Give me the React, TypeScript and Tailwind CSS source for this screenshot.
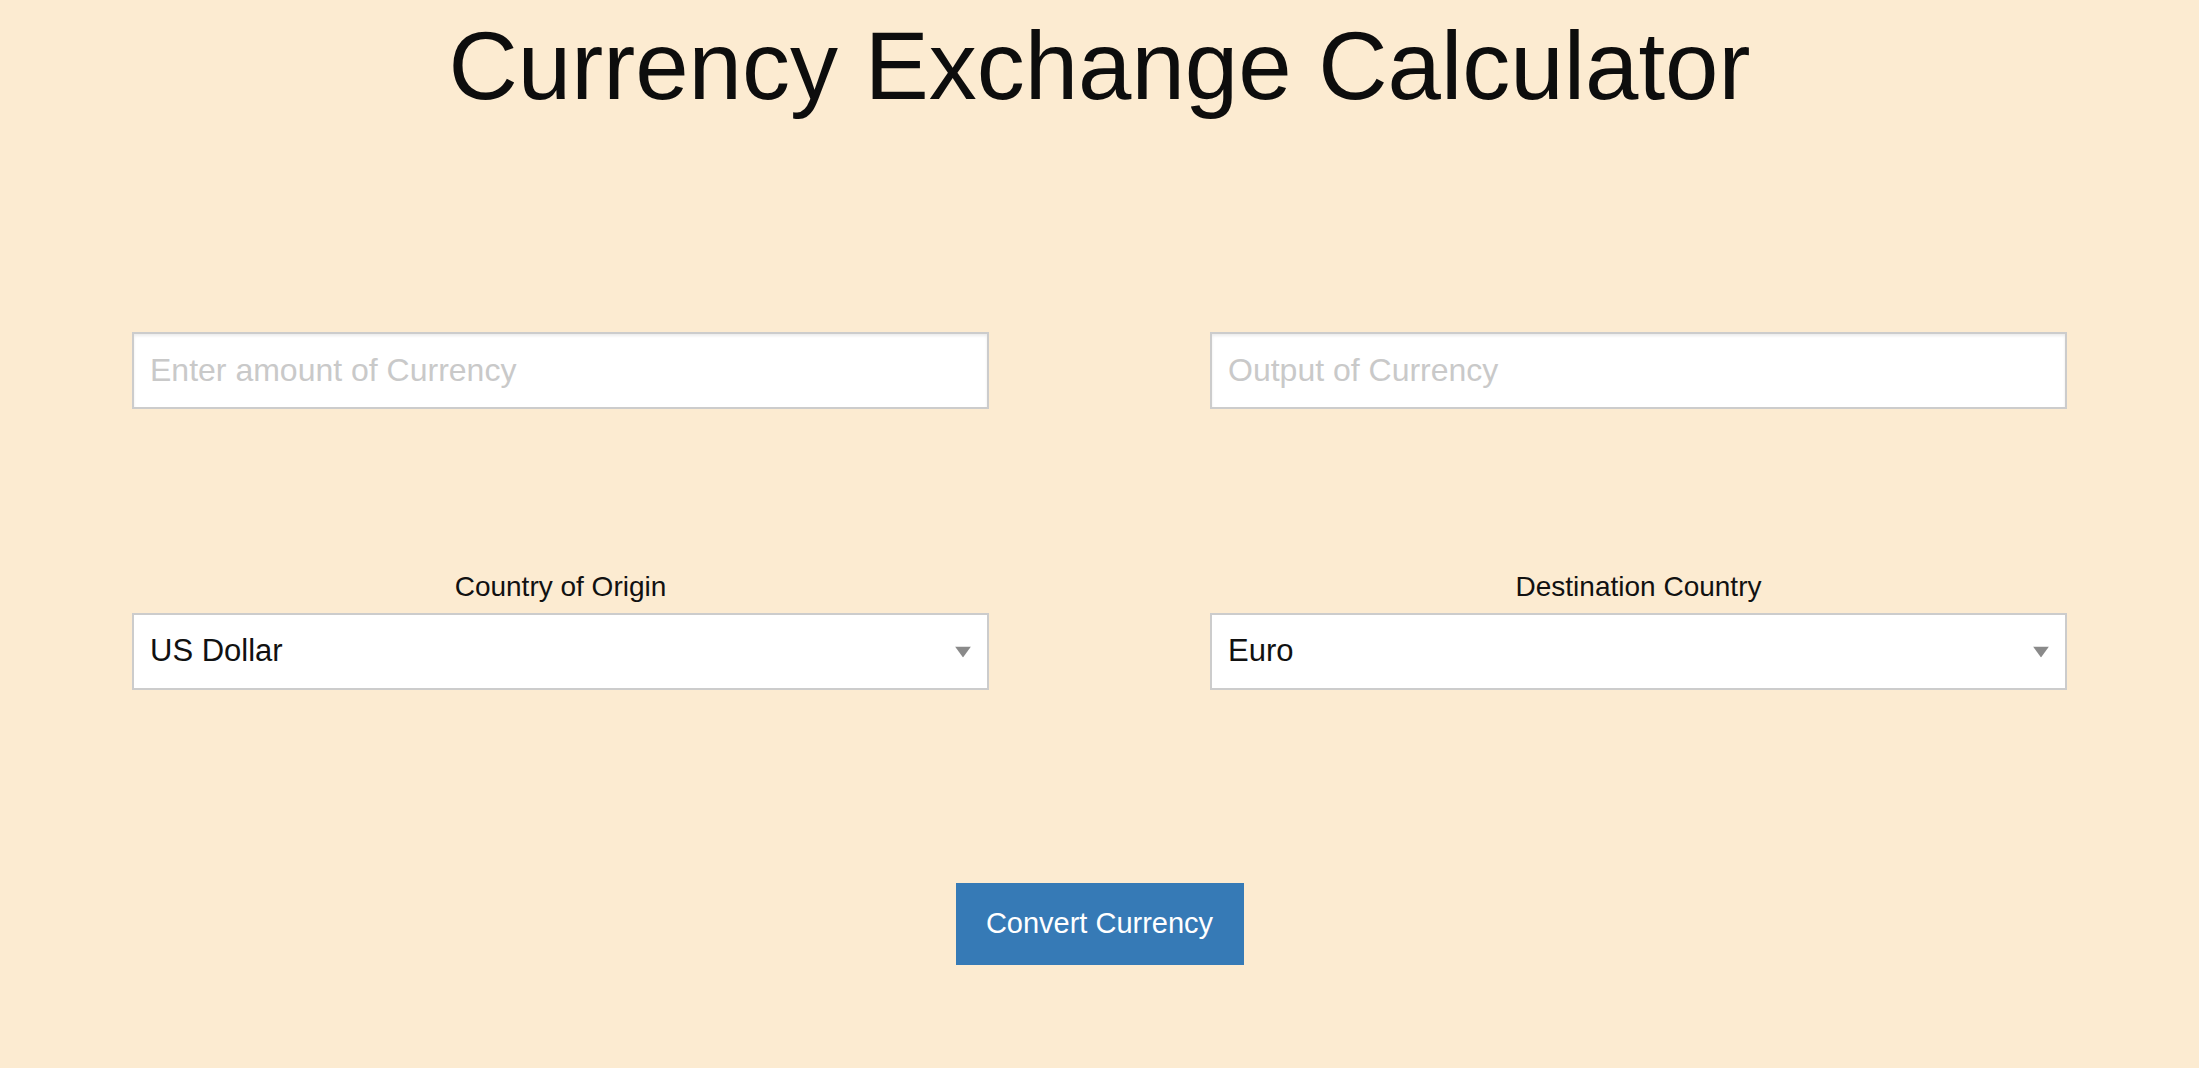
import { useState } from 'react';

const currencies = ['US Dollar', 'Euro', 'British Pound', 'Japanese Yen', 'Canadian Dollar'];

interface CurrencySelectProps {
  label: string;
  value: string;
  onChange: (value: string) => void;
}

const CurrencySelect = ({ label, value, onChange }: CurrencySelectProps) => (
  <div className="flex flex-col">
    <label className="text-center text-[28px] leading-none text-[#111]">{label}</label>
    <div className="relative mt-[12px]">
      <select
        value={value}
        aria-label={label}
        onChange={(e) => onChange(e.target.value)}
        className="h-[77px] w-full appearance-none border-2 border-[#cccccc] bg-white pl-[16px] pr-[48px] text-[31px] text-[#111] outline-none"
      >
        {currencies.map((c) => (
          <option key={c} value={c}>
            {c}
          </option>
        ))}
      </select>
      <svg
        className="pointer-events-none absolute right-[18px] top-1/2 -translate-y-1/2"
        width="16"
        height="11"
        viewBox="0 0 16 11"
      >
        <path d="M0 0 H16 L8 11 Z" fill="#8a8a8a" />
      </svg>
    </div>
  </div>
);

export default function App() {
  const [amount, setAmount] = useState('');
  const [from, setFrom] = useState('US Dollar');
  const [to, setTo] = useState('Euro');

  return (
    <div className="min-h-screen w-full bg-[#fcebd1] font-['Liberation_Sans',Arial,sans-serif]">
      {/* Header */}
      <h1 className="pt-[18px] text-center text-[96px] font-normal leading-none text-[#0d0d0d]">
        Currency Exchange Calculator
      </h1>

      {/* Amount inputs */}
      <div className="mt-[218px] grid grid-cols-2 gap-x-[221px] px-[132px]">
        <input
          type="text"
          value={amount}
          onChange={(e) => setAmount(e.target.value)}
          placeholder="Enter amount of Currency"
          className="h-[77px] w-full border-2 border-[#cccccc] bg-white px-[16px] text-[32px] text-[#111] shadow-[inset_0_2px_3px_rgba(0,0,0,0.08)] outline-none placeholder:text-[#c9c9c9]"
        />
        <input
          type="text"
          readOnly
          placeholder="Output of Currency"
          className="h-[77px] w-full border-2 border-[#cccccc] bg-white px-[16px] text-[32px] text-[#111] shadow-[inset_0_2px_3px_rgba(0,0,0,0.08)] outline-none placeholder:text-[#c9c9c9]"
        />
      </div>

      {/* Country selects */}
      <div className="mt-[164px] grid grid-cols-2 gap-x-[221px] px-[132px]">
        <CurrencySelect label="Country of Origin" value={from} onChange={setFrom} />
        <CurrencySelect label="Destination Country" value={to} onChange={setTo} />
      </div>

      {/* Submit */}
      <div className="mt-[193px] flex justify-center">
        <button
          type="button"
          className="h-[82px] w-[288px] bg-[#367ab6] text-[29px] text-white"
        >
          Convert Currency
        </button>
      </div>
    </div>
  );
}
